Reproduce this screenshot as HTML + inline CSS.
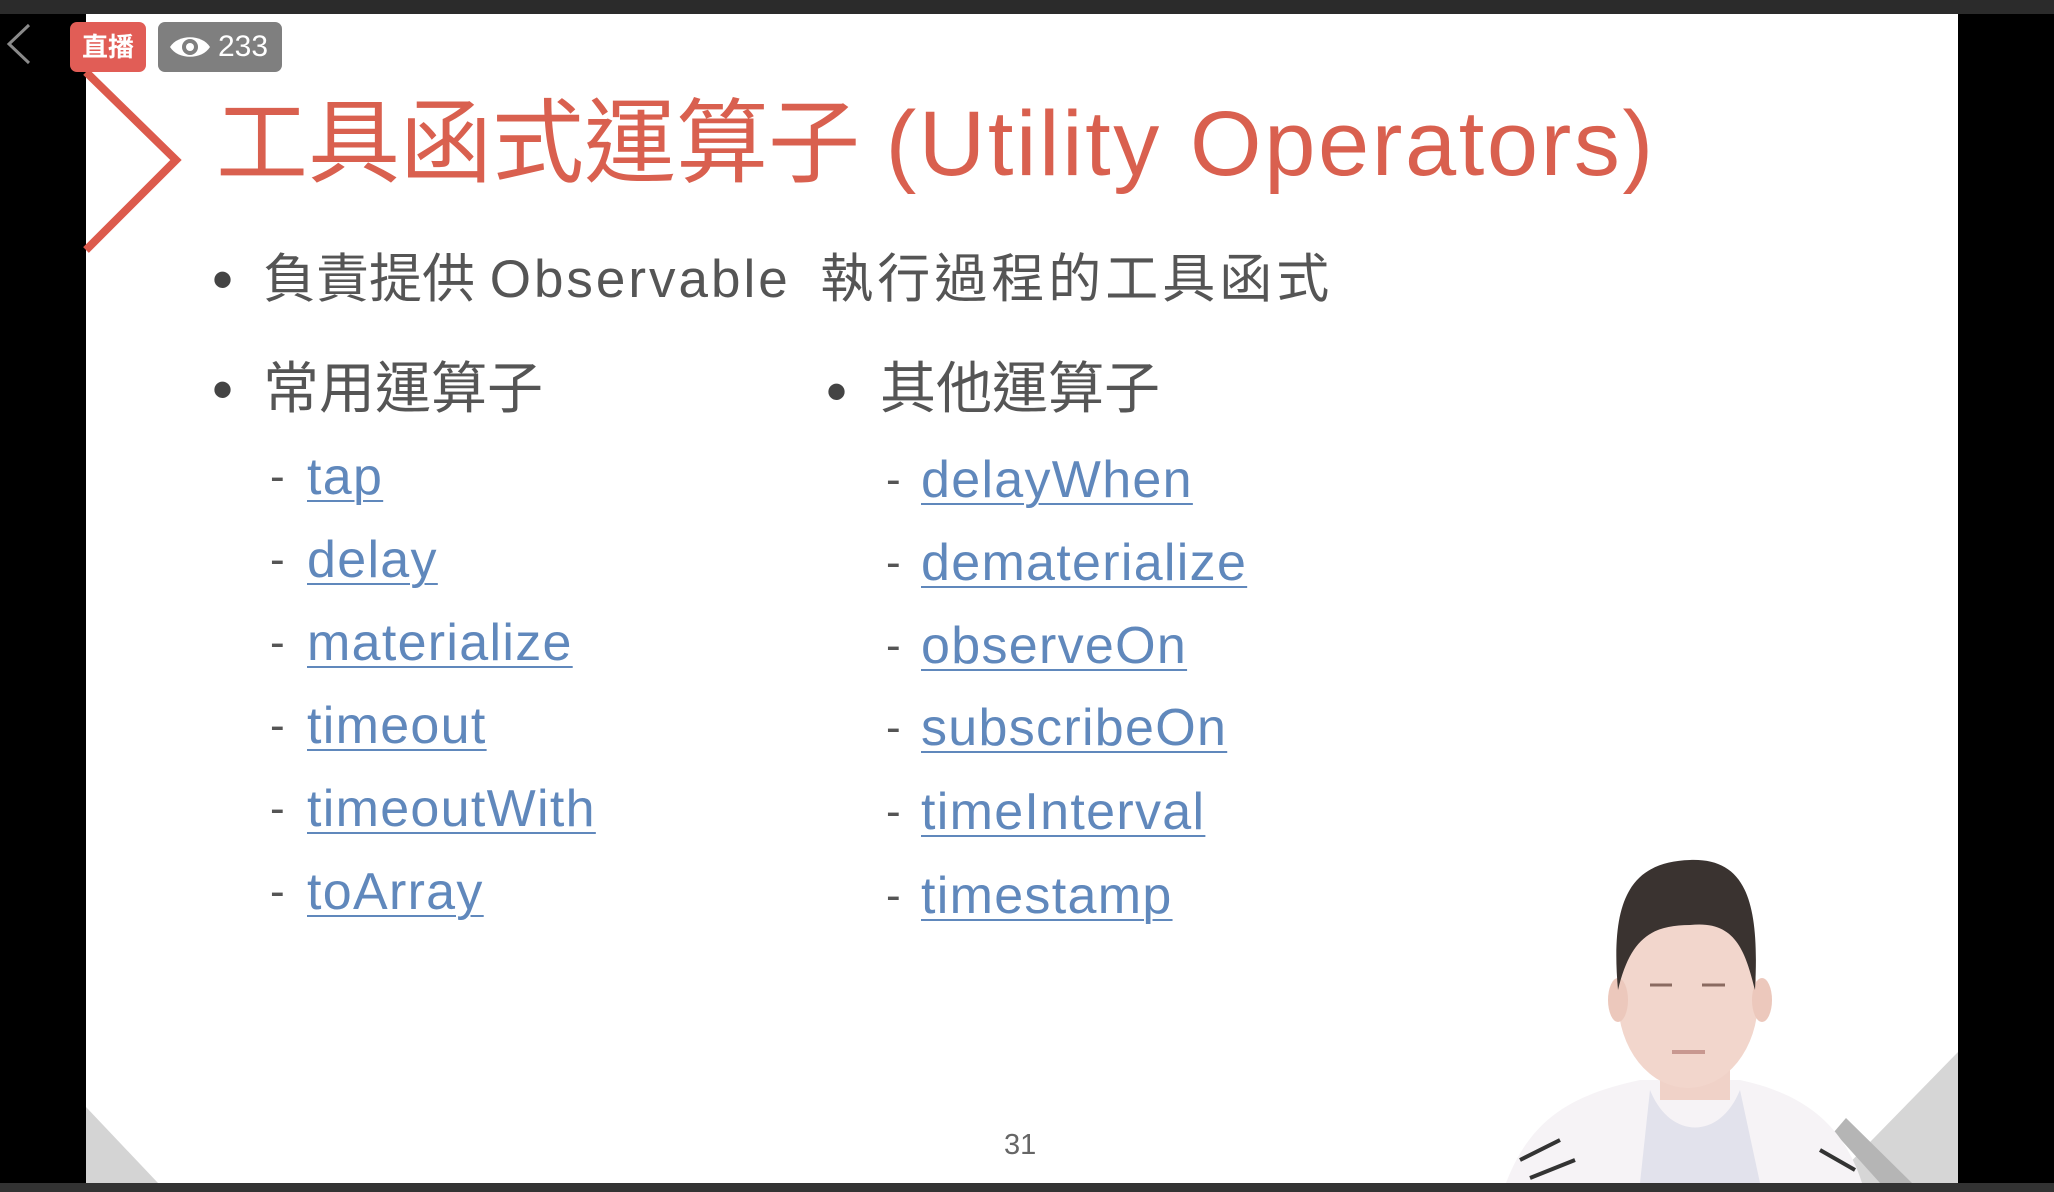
<!DOCTYPE html>
<html><head><meta charset="utf-8"><style>
html,body{margin:0;padding:0;width:2054px;height:1192px;overflow:hidden;background:#000;}
body{position:relative;font-family:"Liberation Sans","Noto Sans CJK TC",sans-serif;}
.abs{position:absolute;white-space:nowrap;line-height:1;}
.slide{position:absolute;left:86px;top:14px;width:1872px;height:1169px;background:#fff;overflow:hidden;}
.cjk{font-family:"Liberation Sans","Noto Sans CJK TC",sans-serif;}
.lk{color:#6088bc;text-decoration:underline;text-decoration-thickness:2px;text-underline-offset:6px;font-size:52px;letter-spacing:1.3px;}
.dash{color:#555;font-size:44px;}
.dot{color:#444;font-size:60px;}
</style></head><body>
<div class="abs" style="left:0;top:0;width:2054px;height:14px;background:#2b2b2b"></div>
<div class="abs" style="left:0;top:1183px;width:2054px;height:9px;background:#333"></div>
<div class="slide"></div>
<svg class="abs" style="left:0;top:0" width="2054" height="1192">
 <polyline points="86,72 176,160 86,250" fill="none" stroke="#dc5a4c" stroke-width="8"/>
 <polygon points="86,1107 158,1183 86,1183" fill="#d4d4d4"/>
 <polygon points="1958,1052 1958,1183 1830,1183" fill="#d6d6d6"/>
 <polygon points="1846,1118 1912,1183 1880,1183 1834,1132" fill="#b5b5b5"/>
 <path d="M1506,1183 C1530,1120 1570,1095 1640,1080 L1740,1080 C1810,1095 1845,1130 1862,1183 Z" fill="#f6f3f6"/>
 <path d="M1650,1090 C1670,1140 1720,1140 1740,1090 L1760,1183 L1640,1183 Z" fill="#e2e2ec"/>
 <path d="M1520,1160 L1560,1140 M1530,1178 L1575,1160 M1820,1150 L1855,1170" stroke="#333" stroke-width="4" fill="none"/>
 <rect x="1660" y="1040" width="70" height="60" fill="#f0d2c8"/>
 <ellipse cx="1688" cy="1000" rx="70" ry="88" fill="#f2d6cc"/>
 <ellipse cx="1618" cy="1000" rx="10" ry="22" fill="#ecc8bc"/>
 <ellipse cx="1762" cy="1000" rx="10" ry="22" fill="#ecc8bc"/>
 <path d="M1618,990 C1610,900 1630,862 1690,860 C1745,858 1760,900 1755,990 C1745,950 1735,920 1690,925 C1650,925 1630,940 1618,990 Z" fill="#3a3330"/>
 <path d="M1650,985 L1672,985 M1702,985 L1725,985" stroke="#8a6a60" stroke-width="3"/>
 <path d="M1672,1052 L1705,1052" stroke="#c89890" stroke-width="4"/>
 <polyline points="29,25 9,44 29,63" fill="none" stroke="#8a8a8a" stroke-width="3"/>
</svg>
<div class="abs" style="left:70px;top:22px;width:76px;height:50px;background:#e15d56;border-radius:7px;color:#fff;font-weight:bold;font-size:26px;line-height:50px;text-align:center">直播</div>
<div class="abs" style="left:158px;top:22px;width:124px;height:50px;background:#7f7f7f;border-radius:7px;"></div>
<svg class="abs" style="left:168px;top:30px" width="44" height="34"><path d="M2,17 C10,4 34,4 42,17 C34,30 10,30 2,17 Z" fill="#fff"/><circle cx="22" cy="17" r="8" fill="#7f7f7f"/><circle cx="22" cy="17" r="4" fill="#fff"/></svg>
<div class="abs" style="left:218px;top:32px;color:#fff;font-size:30px">233</div>

<div class="abs cjk" style="left:216px;top:98px;font-size:92px;color:#d9604f">工具函式運算子 <span style="letter-spacing:2.6px">(Utility Operators)</span></div>
<div class="abs dot" style="left:212px;top:250px">•</div>
<div class="abs cjk" style="left:263px;top:253px;font-size:53px;color:#555">負責提供 <span style="letter-spacing:3px">Observable</span>&nbsp;&nbsp;<span style="letter-spacing:4px">執行過程的工具函式</span></div>
<div class="abs dot" style="left:212px;top:360px">•</div>
<div class="abs cjk" style="left:263px;top:361px;font-size:56px;color:#555">常用運算子</div>
<div class="abs dot" style="left:826px;top:362px">•</div>
<div class="abs cjk" style="left:880px;top:361px;font-size:56px;color:#555">其他運算子</div>

<div class="abs dash" style="left:270px;top:455px">-</div><div class="abs lk" style="left:307px;top:451px">tap</div>
<div class="abs dash" style="left:270px;top:538px">-</div><div class="abs lk" style="left:307px;top:534px">delay</div>
<div class="abs dash" style="left:270px;top:621px">-</div><div class="abs lk" style="left:307px;top:617px">materialize</div>
<div class="abs dash" style="left:270px;top:704px">-</div><div class="abs lk" style="left:307px;top:700px">timeout</div>
<div class="abs dash" style="left:270px;top:787px">-</div><div class="abs lk" style="left:307px;top:783px">timeoutWith</div>
<div class="abs dash" style="left:270px;top:870px">-</div><div class="abs lk" style="left:307px;top:866px">toArray</div>

<div class="abs dash" style="left:886px;top:458px">-</div><div class="abs lk" style="left:921px;top:454px">delayWhen</div>
<div class="abs dash" style="left:886px;top:541px">-</div><div class="abs lk" style="left:921px;top:537px">dematerialize</div>
<div class="abs dash" style="left:886px;top:624px">-</div><div class="abs lk" style="left:921px;top:620px">observeOn</div>
<div class="abs dash" style="left:886px;top:706px">-</div><div class="abs lk" style="left:921px;top:702px">subscribeOn</div>
<div class="abs dash" style="left:886px;top:790px">-</div><div class="abs lk" style="left:921px;top:786px">timeInterval</div>
<div class="abs dash" style="left:886px;top:874px">-</div><div class="abs lk" style="left:921px;top:870px">timestamp</div>

<div class="abs" style="left:1004px;top:1131px;font-size:29px;color:#666">31</div>
</body></html>
